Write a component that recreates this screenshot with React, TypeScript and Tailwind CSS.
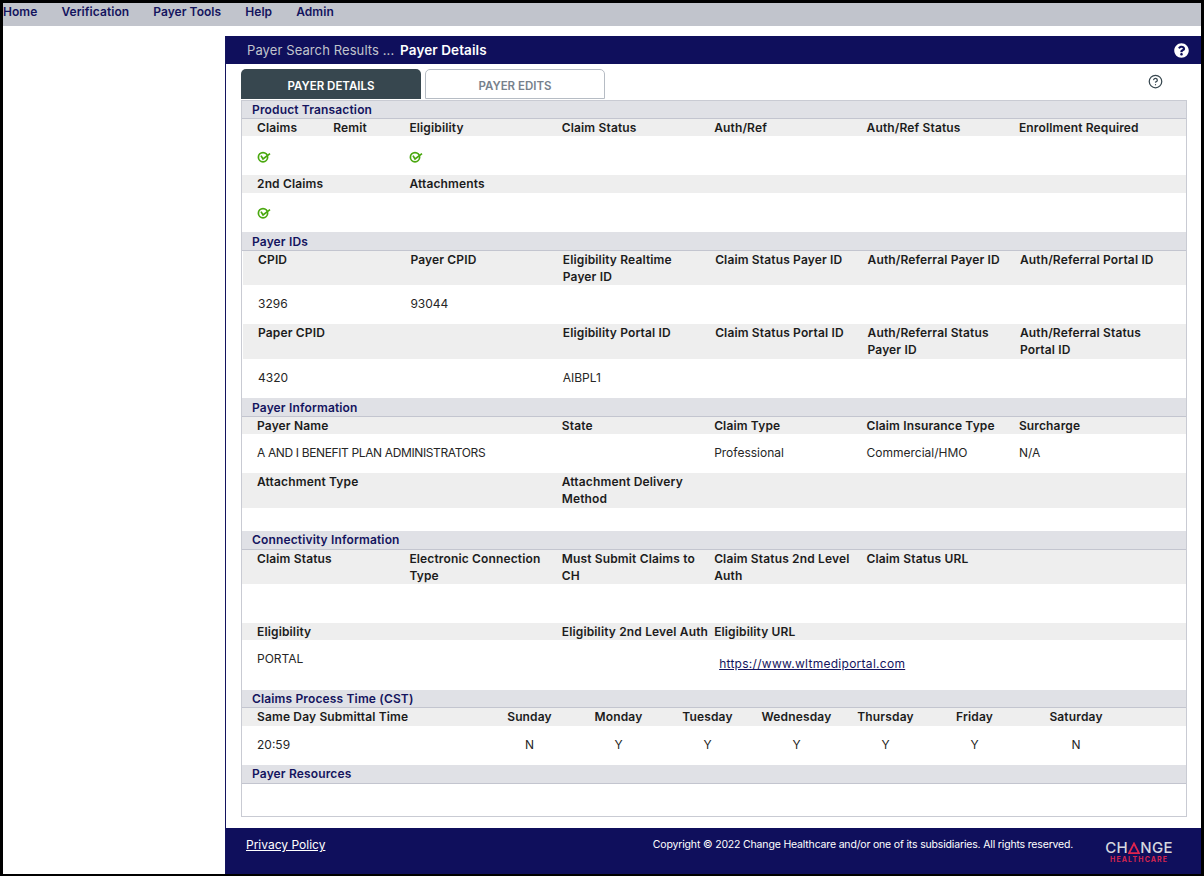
import React from 'react';
import { CircleHelp } from 'lucide-react';
import { FaQuestionCircle } from 'react-icons/fa';

const GRID = 'grid grid-cols-[repeat(12,76.2px)] pl-[15px] pr-[10px]';

function Check({ className = 'mt-[3px]' }: { className?: string }) {
  return (
    <svg className={`block ${className}`} width="14" height="12" viewBox="0 0 14 12" fill="none" stroke="#4aa80f" strokeWidth="1.7">
      <circle cx="6" cy="6.2" r="4.6" />
      <path d="M4 4.6 L6 8 L13 2.6" />
    </svg>
  );
}

function SectionHeader({ title, h = 'h-[18px]' }: { title: string; h?: string }) {
  return (
    <div className={`${h} bg-[#e0e1e6] border-b border-[#c3c5cf] pl-[10px] text-[12px] leading-[17px] tracking-[0.15px] font-semibold text-[#14145e]`}>
      {title}
    </div>
  );
}

type Cell = { text?: React.ReactNode; span?: string };

function LabelRow({ cells, h = 'h-[17px]' }: { cells: Cell[]; h?: string }) {
  return (
    <div className={`${GRID} ${h} bg-[#eeeeee] items-start text-[12px] leading-[17px] tracking-[0.15px] font-semibold text-[#1c1c1c]`}>
      {cells.map((c, i) => (
        <div key={i} className={c.span ?? 'col-span-2'}>
          {c.text}
        </div>
      ))}
    </div>
  );
}

function ValueRow({ cells, h = 'h-[39px]', extra = 'pb-[2px]' }: { cells: Cell[]; h?: string; extra?: string }) {
  return (
    <div className={`${GRID} ${h} ${extra} items-center text-[12px] text-[#262626] bg-white`}>
      {cells.map((c, i) => (
        <div key={i} className={c.span ?? 'col-span-2'}>
          {c.text}
        </div>
      ))}
    </div>
  );
}

const DAYS = ['Sunday', 'Monday', 'Tuesday', 'Wednesday', 'Thursday', 'Friday', 'Saturday'];
const DAY_VALUES = ['N', 'Y', 'Y', 'Y', 'Y', 'Y', 'N'];

export default function App() {
  return (
    <div
      className="w-[1204px] h-[876px] overflow-hidden bg-white border-t-[3px] border-l-[3px] border-r-[3px] border-b-[2px] border-black flex flex-col"
      style={{ fontFamily: 'Inter, "Open Sans", sans-serif' }}
    >
      {/* Top menu */}
      <nav className="h-[23px] shrink-0 bg-[#c1c4cc] flex gap-6 pb-[5px] items-center text-[12px] tracking-[0.06px] font-semibold text-[#14145e]">
        <span>Home</span>
        <span>Verification</span>
        <span>Payer Tools</span>
        <span>Help</span>
        <span>Admin</span>
      </nav>

      <div className="flex-1 flex pt-[10px] min-h-0">
        <div className="w-[223px] shrink-0 border-r border-[#14145e]" />

        <main className="flex-1 flex flex-col min-w-0">
          {/* Title bar */}
          <div className="h-[28px] shrink-0 bg-[#0f0f5c] flex items-center justify-between pl-[21px] pr-[12px] text-[13px]">
            <div className="text-[#c1c4cc] pt-px tracking-[0.1px]">
              Payer Search Results ... <span className="ml-[2px] text-[13.5px] font-semibold text-white">Payer Details</span>
            </div>
            <FaQuestionCircle className="text-white" size={15} />
          </div>

          {/* Tabs */}
          <div className="h-[36px] shrink-0 flex items-end gap-[4px] pl-[15px] pb-px relative">
            <div className="w-[180px] h-[30px] pt-[5px] bg-[#37474f] rounded-t-[5px] flex items-center justify-center text-[11.5px] font-semibold text-white">
              PAYER DETAILS
            </div>
            <div className="w-[180px] h-[30px] pt-[5px] bg-white border border-[#b6bcc4] rounded-t-[5px] flex items-center justify-center text-[11.5px] font-semibold text-[#77818c]">
              PAYER EDITS
            </div>
            <CircleHelp className="absolute right-[38px] top-[10px] text-[#37474f]" size={15} strokeWidth={2} />
          </div>

          {/* Detail box */}
          <div className="w-[946px] ml-[15px] h-[717px] shrink-0 border border-[#c9cbd3] bg-white overflow-hidden">
            <SectionHeader title="Product Transaction" />
            <LabelRow
              cells={[
                { text: 'Claims', span: 'col-span-1' },
                { text: 'Remit', span: 'col-span-1' },
                { text: 'Eligibility' },
                { text: 'Claim Status' },
                { text: 'Auth/Ref' },
                { text: 'Auth/Ref Status' },
                { text: 'Enrollment Required' },
              ]}
            />
            <ValueRow extra="" cells={[{ text: <Check /> }, { text: <Check /> }]} />
            <LabelRow h="h-[18px]" cells={[{ text: '2nd Claims' }, { text: 'Attachments' }]} />
            <ValueRow extra="" cells={[{ text: <Check className="mt-0" /> }]} />

            <SectionHeader title="Payer IDs" h="h-[19px] pt-px" />
            <div className="pl-px">
              <LabelRow
                h="h-[34px]"
                cells={[
                  { text: 'CPID' },
                  { text: 'Payer CPID' },
                  {
                    text: (
                      <>
                        Eligibility Realtime
                        <br />
                        Payer ID
                      </>
                    ),
                  },
                  { text: 'Claim Status Payer ID' },
                  { text: 'Auth/Referral Payer ID' },
                  { text: 'Auth/Referral Portal ID' },
                ]}
              />
              <ValueRow cells={[{ text: '3296' }, { text: '93044' }]} />
              <LabelRow
                h="h-[35px]"
                cells={[
                  { text: 'Paper CPID', span: 'col-span-4' },
                  { text: 'Eligibility Portal ID' },
                  { text: 'Claim Status Portal ID' },
                  { text: 'Auth/Referral Status Payer ID' },
                  { text: 'Auth/Referral Status Portal ID' },
                ]}
              />
              <ValueRow cells={[{ text: '4320', span: 'col-span-4' }, { text: 'AIBPL1' }]} />
            </div>

            <SectionHeader title="Payer Information" h="h-[19px] pt-px" />
            <LabelRow
              cells={[
                { text: 'Payer Name', span: 'col-span-4' },
                { text: 'State' },
                { text: 'Claim Type' },
                { text: 'Claim Insurance Type' },
                { text: 'Surcharge' },
              ]}
            />
            <ValueRow
              cells={[
                {
                  text: <span className="tracking-[-0.37px]">A AND I BENEFIT PLAN ADMINISTRATORS</span>,
                  span: 'col-span-6',
                },
                { text: 'Professional' },
                { text: 'Commercial/HMO' },
                { text: 'N/A' },
              ]}
            />
            <LabelRow
              h="h-[35px]"
              cells={[
                { text: 'Attachment Type', span: 'col-span-4' },
                { text: 'Attachment Delivery Method' },
              ]}
            />
            <ValueRow h="h-[23px]" cells={[]} />

            <SectionHeader title="Connectivity Information" h="h-[19px]" />
            <LabelRow
              h="h-[34px]"
              cells={[
                { text: 'Claim Status' },
                { text: 'Electronic Connection Type' },
                {
                  text: (
                    <>
                      Must Submit Claims to
                      <br />
                      CH
                    </>
                  ),
                },
                { text: 'Claim Status 2nd Level Auth' },
                { text: 'Claim Status URL' },
              ]}
            />
            <ValueRow cells={[]} />
            <LabelRow
              cells={[
                { text: 'Eligibility', span: 'col-span-4' },
                { text: 'Eligibility 2nd Level Auth' },
                { text: 'Eligibility URL' },
              ]}
            />
            <div className={`${GRID} h-[50px] text-[12px] text-[#262626] bg-white pt-[10px]`}>
              <div className="col-span-6">PORTAL</div>
              <div className="col-span-6 pl-[5px] pt-[5px]">
                <a href="#" className="underline tracking-[0.28px] text-[#14145e]">
                  https://www.wltmediportal.com
                </a>
              </div>
            </div>

            <SectionHeader title="Claims Process Time (CST)" />
            <div className="grid grid-cols-[228px_repeat(6,89px)_114px] pl-[15px] h-[18px] bg-[#eeeeee] text-[12px] leading-[17px] tracking-[0.15px] font-semibold text-[#1c1c1c]">
              <div>Same Day Submittal Time</div>
              {DAYS.map((d) => (
                <div key={d} className="text-center">
                  {d}
                </div>
              ))}
            </div>
            <div className="grid grid-cols-[228px_repeat(6,89px)_114px] pl-[15px] pb-[2px] h-[39px] items-center text-[12px] text-[#262626]">
              <div>20:59</div>
              {DAY_VALUES.map((v, i) => (
                <div key={i} className="text-center">
                  {v}
                </div>
              ))}
            </div>

            <SectionHeader title="Payer Resources" h="h-[19px]" />
          </div>

          {/* Footer */}
          <footer className="mt-[11px] flex-1 bg-[#0f0f5c] flex items-start justify-between pl-[20px] pr-[28px] text-white">
            <a href="#" className="underline text-[12px] mt-[8px]">
              Privacy Policy
            </a>
            <div className="flex items-start gap-[32px]">
              <span className="text-[10.5px] tracking-[-0.17px] mt-[9px]">
                Copyright © 2022 Change Healthcare and/or one of its subsidiaries. All rights reserved.
              </span>
              <div className="mt-[13px] flex flex-col items-center">
                <div className="flex items-center text-[15px] leading-[14px] font-medium text-[#d5d7df] tracking-[0.4px]">
                  CH
                  <svg width="12" height="12" viewBox="0 0 12 12" fill="none" stroke="#e0254e" strokeWidth="1.8">
                    <path d="M1 11.2 L6 1.5 L11 11.2 Z" />
                  </svg>
                  NGE
                </div>
                <div className="text-[7px] leading-[9px] font-bold text-[#d6254f] tracking-[1.1px]">HEALTHCARE</div>
              </div>
            </div>
          </footer>
        </main>
      </div>
    </div>
  );
}
